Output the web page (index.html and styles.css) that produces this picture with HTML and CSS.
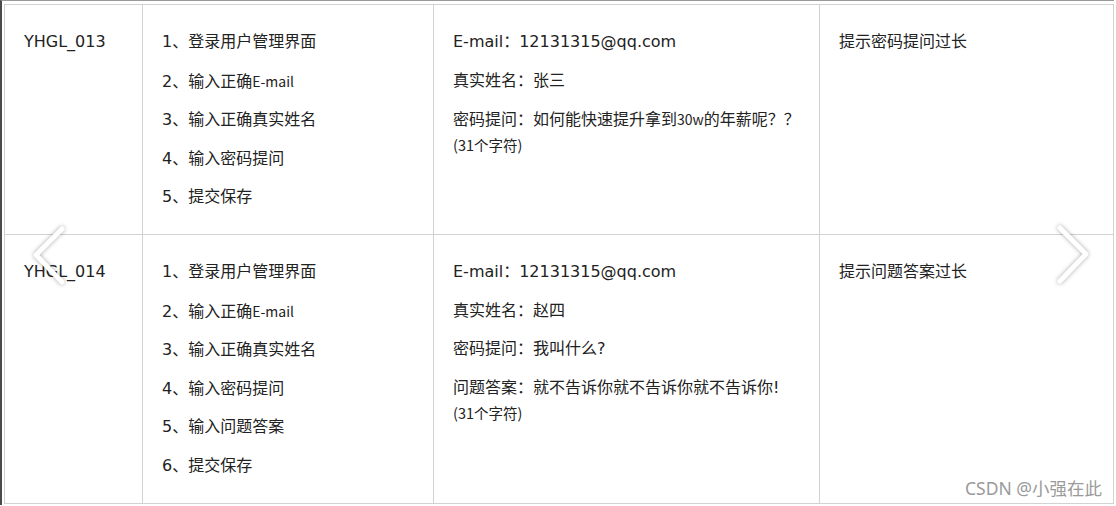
FILE: index.html
```html
<!DOCTYPE html>
<html lang="zh-CN">
<head>
    <meta charset="UTF-8">
    <title>用户管理测试用例</title>
    <link rel="stylesheet" href="styles.css">
</head>
<body>
    <div class="frame">
        <table class="cases">
            <colgroup>
                <col class="colId">
                <col class="colSteps">
                <col class="colData">
                <col class="colResult">
            </colgroup>
            <tr class="rowFirst">
                <td>YHGL_013</td>
                <td>
                    <p>1、登录用户管理界面</p>
                    <p>2、输入正确<span class="alt">E-mail</span></p>
                    <p>3、输入正确真实姓名</p>
                    <p>4、输入密码提问</p>
                    <p>5、提交保存</p>
                </td>
                <td>
                    <p>E-mail：12131315@qq.com</p>
                    <p>真实姓名：张三</p>
                    <p>密码提问：如何能快速提升拿到<span class="alt">30w</span>的年薪呢？？<span class="note">(31个字符)</span></p>
                </td>
                <td>提示密码提问过长</td>
            </tr>
            <tr class="rowSecond">
                <td>YHGL_014</td>
                <td>
                    <p>1、登录用户管理界面</p>
                    <p>2、输入正确<span class="alt">E-mail</span></p>
                    <p>3、输入正确真实姓名</p>
                    <p>4、输入密码提问</p>
                    <p>5、输入问题答案</p>
                    <p>6、提交保存</p>
                </td>
                <td>
                    <p>E-mail：12131315@qq.com</p>
                    <p>真实姓名：赵四</p>
                    <p>密码提问：我叫什么?</p>
                    <p>问题答案：就不告诉你就不告诉你就不告诉你!<span class="note">(31个字符)</span></p>
                </td>
                <td>提示问题答案过长</td>
            </tr>
        </table>

        <!-- carousel arrows drawn over the table -->
        <svg class="arrow arrowLeft" width="40" height="64" viewBox="0 0 40 64">
            <polyline points="31,5 5,31 31,58" />
        </svg>
        <svg class="arrow arrowRight" width="40" height="64" viewBox="0 0 40 64">
            <polyline points="6,4 32,30 6,57" />
        </svg>

        <span class="watermark">CSDN @小强在此</span>
    </div>
</body>
</html>
```

FILE: styles.css
```css
body {
    margin: 0;
    background-color: #fff;
    font-family: "DejaVu Sans", "Noto Sans CJK SC", sans-serif;
    font-size: 16px;
    color: #222;
}

.frame {
    position: relative;
    width: 1114px;
    height: 505px;
    border-top: 1px solid #9a9a9a;
    border-left: 2px solid #4a4a4a;
    padding: 3px 0 0 2px;
    box-sizing: border-box;
}

.cases {
    width: 1109px;
    table-layout: fixed;
    border-collapse: collapse;
    border: 1px solid #cccccc;
}
.colId { width: 138px; }
.colSteps { width: 291px; }
.colData { width: 386px; }
.colResult { width: 294px; }

.rowFirst { height: 230px; }
.rowSecond { height: 269px; }

.cases td {
    border: 1px solid #d2d2d2;
    vertical-align: top;
    padding: 25px 19px 0;
    line-height: 24px;
}
.cases td p {
    margin: 0 0 14.5px;
}

.alt {
    font-family: "Noto Sans CJK SC", sans-serif;
    font-size: 14px;
}
.note {
    display: block;
    font-family: "Noto Sans CJK SC", sans-serif;
    font-size: 14.5px;
    line-height: 26px;
}

.arrow {
    position: absolute;
    filter: drop-shadow(0 0 2px rgba(0, 0, 0, 0.35));
}
.arrow polyline {
    fill: none;
    stroke: #fff;
    stroke-width: 5;
    stroke-linecap: round;
    stroke-linejoin: round;
}
.arrowLeft {
    left: 29px;
    top: 223px;
}
.arrowRight {
    left: 1052px;
    top: 223px;
}

.watermark {
    position: absolute;
    left: 963px;
    top: 474px;
    font-family: "Noto Sans", "Noto Sans CJK SC", sans-serif;
    font-size: 17.5px;
    color: #9a9a9a;
}
```
